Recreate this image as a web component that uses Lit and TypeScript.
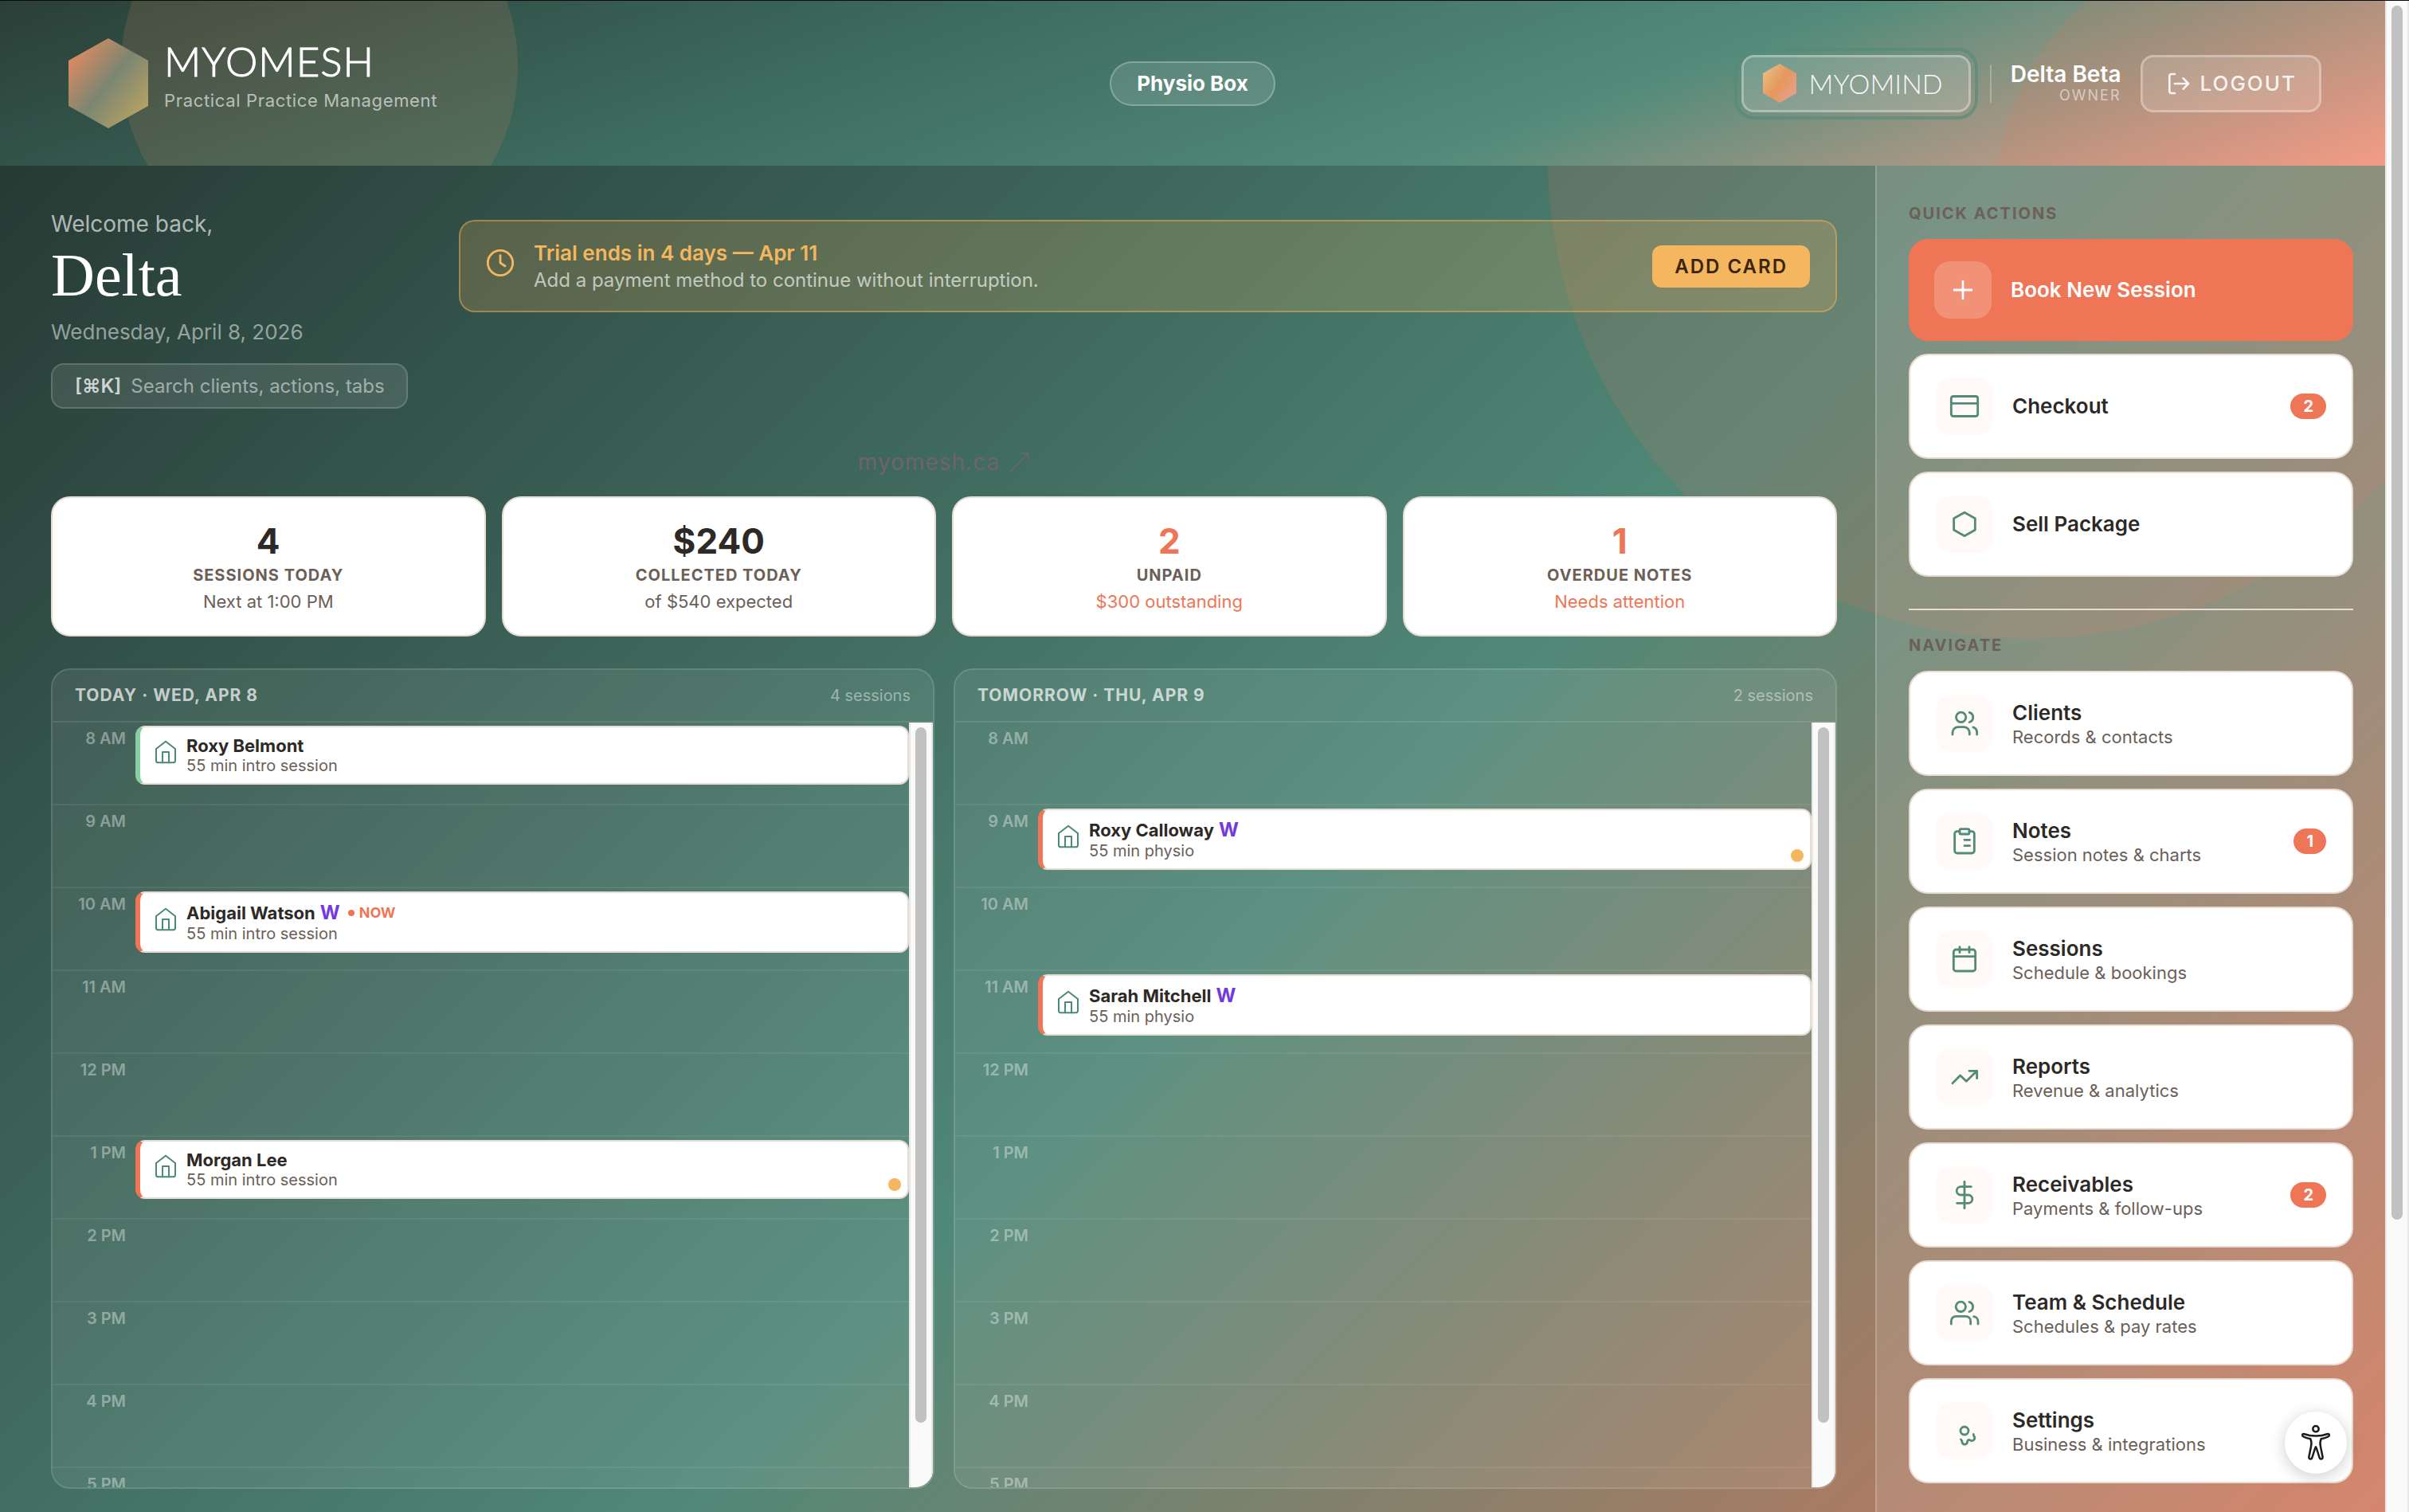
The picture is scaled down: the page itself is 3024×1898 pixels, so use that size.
import { LitElement, html, css, svg, nothing, type TemplateResult } from "lit";
import { customElement, property } from "lit/decorators.js";

type Session = {
  name: string;
  detail: string;
  status: "done" | "booked";
  tag?: boolean;
  now?: boolean;
  alert?: boolean;
};

type NavItem = { icon: string; title: string; sub?: string; count?: number };

const HOURS = ["8 AM", "9 AM", "10 AM", "11 AM", "12 PM", "1 PM", "2 PM", "3 PM", "4 PM", "5 PM"];

const TODAY: Record<string, Session> = {
  "8 AM": { name: "Roxy Belmont", detail: "55 min intro session", status: "done" },
  "10 AM": { name: "Abigail Watson", detail: "55 min intro session", status: "booked", tag: true, now: true },
  "1 PM": { name: "Morgan Lee", detail: "55 min intro session", status: "booked", alert: true },
};

const TOMORROW: Record<string, Session> = {
  "9 AM": { name: "Roxy Calloway", detail: "55 min physio", status: "booked", tag: true, alert: true },
  "11 AM": { name: "Sarah Mitchell", detail: "55 min physio", status: "booked", tag: true },
};

const STATS = [
  { value: "4", label: "Sessions today", note: "Next at 1:00 PM", warn: false },
  { value: "$240", label: "Collected today", note: "of $540 expected", warn: false },
  { value: "2", label: "Unpaid", note: "$300 outstanding", warn: true },
  { value: "1", label: "Overdue notes", note: "Needs attention", warn: true },
];

const QUICK: NavItem[] = [
  { icon: "card", title: "Checkout", count: 2 },
  { icon: "hexagon", title: "Sell Package" },
];

const NAV: NavItem[] = [
  { icon: "clients", title: "Clients", sub: "Records & contacts" },
  { icon: "notes", title: "Notes", sub: "Session notes & charts", count: 1 },
  { icon: "calendar", title: "Sessions", sub: "Schedule & bookings" },
  { icon: "trend", title: "Reports", sub: "Revenue & analytics" },
  { icon: "dollar", title: "Receivables", sub: "Payments & follow-ups", count: 2 },
  { icon: "team", title: "Team & Schedule", sub: "Schedules & pay rates" },
  { icon: "settings", title: "Settings", sub: "Business & integrations" },
];

const SHAPES: Record<string, TemplateResult<2>> = {
  plus: svg`<path d="M12 5.5v13M5.5 12h13" />`,
  card: svg`<rect x="2" y="4.5" width="20" height="15" rx="1.6" /><path d="M2 9.8h20" />`,
  hexagon: svg`<path d="M12 3.2 20 7.6v8.8l-8 4.4-8-4.4V7.6z" />`,
  clients: svg`<circle cx="9.4" cy="7.4" r="3.7" /><path d="M15.7 3.8a3.8 3.8 0 0 1 0 7.3M3 20.4V19a4.2 4.2 0 0 1 4.2-4.2h4.4A4.2 4.2 0 0 1 15.8 19v1.4M18.5 14.9a4.2 4.2 0 0 1 2.9 4v1.5" />`,
  team: svg`<circle cx="9.2" cy="7.4" r="3.7" /><path d="M15.6 3.8a3.8 3.8 0 0 1 0 7.3M2 20.4v-2.2a3.6 3.6 0 0 1 3.6-3.6H13a3.6 3.6 0 0 1 3.6 3.6v2.2M19 14.8a3.7 3.7 0 0 1 3.2 3.6v2" />`,
  notes: svg`<path d="M8.4 4.6H6.4a1.8 1.8 0 0 0-1.8 1.8v12.8A1.8 1.8 0 0 0 6.4 21h11.2a1.8 1.8 0 0 0 1.8-1.8V6.4a1.8 1.8 0 0 0-1.8-1.8h-2M12 11h4M12 15.4h4" /><rect x="8.4" y="2.8" width="7.2" height="3.8" rx=".9" />`,
  calendar: svg`<rect x="3.8" y="4.8" width="16.4" height="16.2" rx="1.8" /><path d="M3.8 10h16.4M8.4 2.8V7M15.6 2.8V7" />`,
  trend: svg`<path d="m3 16.6 5.8-5.8 4.6 4.4 8-7.8M15.6 7.4h5.8V13" />`,
  dollar: svg`<path d="M12 2v20M17 5.8H9.2a3.1 3.1 0 0 0 0 6.2h5.6a3.1 3.1 0 0 1 0 6.2H6.4" />`,
  settings: svg`<circle cx="12" cy="12" r="3" /><path d="m9.3 18.6.9 1.2v.8a2 2 0 0 0 3.9.2c.1-1.3.5-2 1.4-2 .7 0 .9.8 2 .8a2.2 2.2 0 0 0 2.2-2.2c0-1.2-1-1.2-.9-2.8" />`,
  clock: svg`<circle cx="12" cy="12" r="9.4" /><path d="M12 6.4V12l3.6 2.4" />`,
  logout: svg`<path d="M9 21H6a2 2 0 0 1-2-2V5a2 2 0 0 1 2-2h3M9 12h12.5M17 7l4.8 5L17 17" />`,
  home: svg`<path d="m3 9 9-7 9 7v11a2 2 0 0 1-2 2H5a2 2 0 0 1-2-2z" /><path d="M9 22V12h6v10" />`,
  arrow: svg`<path d="M1 23 22 2M14 2h8v8" />`,
};

@customElement("line-icon")
export class LineIcon extends LitElement {
  static styles = css`
    :host { display: block; flex: none; width: 40px; height: 40px; }
    .shape { display: block; width: 100%; height: 100%; }
  `;
  @property() name = "";
  @property({ type: Number }) weight = 1.7;
  render() {
    return html`<svg class="shape" viewBox="0 0 24 24" fill="none" stroke="currentColor"
      stroke-width=${this.weight} stroke-linecap="round" stroke-linejoin="round" aria-hidden="true">
      ${SHAPES[this.name]}
    </svg>`;
  }
}

@customElement("scroll-rail")
export class ScrollRail extends LitElement {
  static styles = css`
    :host {
      display: block; flex: none; width: 30px; box-sizing: border-box; padding: 6px 6px 0;
      background: #fafafa; border: solid #e8e8e8; border-width: 0 2px;
    }
    .thumb { border-radius: 8px; background: #c1c1c1; }
  `;
  @property({ type: Number }) share = 50;
  render() {
    return html`<div class="thumb" style="height:${this.share}%"></div>`;
  }
}

@customElement("day-panel")
export class DayPanel extends LitElement {
  static styles = css`
    :host {
      display: flex; flex-direction: column; min-height: 0; min-width: 0; overflow: hidden;
      border: 2px solid rgba(255, 255, 255, 0.12); border-radius: 24px;
      background: rgba(255, 255, 255, 0.08);
    }
    .head {
      display: flex; align-items: center; justify-content: space-between; flex: none;
      height: 64px; padding: 0 28px; border-bottom: 2px solid rgba(255, 255, 255, 0.1);
    }
    .title {
      margin: 0; font-size: 21px; line-height: 24px; font-weight: 700; letter-spacing: 1px;
      text-transform: uppercase; color: rgba(255, 255, 255, 0.7);
    }
    .count { font-size: 20px; line-height: 24px; color: rgba(255, 255, 255, 0.45); }
    .body { flex: 1; min-height: 0; display: flex; }
    .hours { flex: 1; min-width: 0; overflow: hidden; }
    .row {
      box-sizing: border-box; height: 104px; display: flex; align-items: flex-start; gap: 12px;
      border-bottom: 2px solid rgba(255, 255, 255, 0.07);
    }
    .hour {
      width: 92px; flex: none; padding-top: 8px; text-align: right;
      font-size: 20px; line-height: 24px; font-weight: 600; color: rgba(255, 255, 255, 0.4);
    }
    .event {
      position: relative; flex: 1; min-width: 0; box-sizing: border-box; margin-top: 4px;
      display: flex; align-items: center; gap: 10px; padding: 10px 16px;
      border: 2px solid #e8dcd2; border-left: 6px solid #ee7656; border-radius: 12px;
      background: #fff; color: #2d2926; font-family: inherit; text-align: left;
    }
    .done { border-left-color: #86cfa4; }
    .event line-icon { width: 32px; height: 32px; margin-bottom: 8px; color: #4a8a78; }
    .name { display: flex; align-items: center; gap: 6px; font-size: 22px; line-height: 26px; font-weight: 700; }
    .detail { font-size: 20px; line-height: 24px; color: #6b6058; }
    .tag { font-size: 24px; line-height: 29px; font-weight: 700; color: #7339e0; }
    .now {
      display: flex; align-items: center; gap: 6px; padding-left: 4px;
      font-size: 18px; line-height: 24px; font-weight: 700; color: #ee7656;
    }
    .now::before { content: ""; width: 8px; height: 8px; border-radius: 50%; background: currentColor; }
    .dot {
      position: absolute; right: 8px; bottom: 8px; width: 16px; height: 16px;
      border-radius: 50%; background: #f4b65e;
    }
  `;
  @property() heading = "";
  @property() count = "";
  @property({ attribute: false }) sessions: Record<string, Session> = {};

  private event(s: Session) {
    return html`<button class="event ${s.status}">
      <line-icon name="home" weight="1.5"></line-icon>
      <div>
        <div class="name">
          <span>${s.name}</span>
          ${s.tag ? html`<span class="tag">W</span>` : nothing}
          ${s.now ? html`<span class="now">NOW</span>` : nothing}
        </div>
        <div class="detail">${s.detail}</div>
      </div>
      ${s.alert ? html`<span class="dot"></span>` : nothing}
    </button>`;
  }

  render() {
    return html`
      <div class="head">
        <h2 class="title">${this.heading}</h2>
        <span class="count">${this.count}</span>
      </div>
      <div class="body">
        <div class="hours">
          ${HOURS.map((h) => html`<div class="row">
            <span class="hour">${h}</span>
            ${this.sessions[h] ? this.event(this.sessions[h]) : nothing}
          </div>`)}
        </div>
        <scroll-rail share="91.5"></scroll-rail>
      </div>
    `;
  }
}

@customElement("app-root")
export class AppRoot extends LitElement {
  static styles = css`
    :host {
      display: flex; height: 100vh; overflow: hidden; box-sizing: border-box;
      border-top: 1px solid #0a0a0a;
      font-family: Inter, "Liberation Sans", sans-serif; color: #2d2926;
    }
    a { color: inherit; text-decoration: none; }
    button { font-family: inherit; cursor: pointer; }

    .page { flex: 1; min-width: 0; display: flex; flex-direction: column; }

    .header {
      position: relative; overflow: hidden; flex: none; height: 207px; box-sizing: border-box;
      display: grid; grid-template-columns: 1fr auto 1fr; align-items: center; padding: 0 80px;
      background: linear-gradient(160deg, #2a3f38 0%, #3d6b5e 35%, #528b7a 66%, #f4a28e 100%);
    }
    .glow { position: absolute; border-radius: 50%; }
    .glow-gold { left: 152px; top: -167px; width: 498px; height: 498px; background: rgba(238, 144, 90, 0.14); }
    .glow-coral { right: -191px; top: -86px; width: 680px; height: 680px; background: rgba(238, 117, 84, 0.13); }

    .brand { position: relative; display: flex; align-items: center; gap: 20px; padding-left: 6px; }
    .brand-mark { width: 100px; height: 113px; flex: none; }
    .brand-name {
      font-family: Lato, "Open Sans", sans-serif; font-weight: 300; font-size: 51px; line-height: 48px;
      letter-spacing: 1px; color: #fff; -webkit-text-stroke: 1px #fff;
    }
    .brand-tag {
      margin-bottom: 6px; font-size: 22px; line-height: 50px; letter-spacing: 0.03em;
      color: rgba(255, 255, 255, 0.62);
    }

    .clinic {
      position: relative; padding: 10px 32px; border: 2px solid rgba(255, 255, 255, 0.25); border-radius: 28px;
      background: rgba(255, 255, 255, 0.12); color: #fff; font-size: 26px; line-height: 32px; font-weight: 700;
    }

    .account { position: relative; display: flex; align-items: center; justify-content: flex-end; gap: 24px; }
    .mind {
      box-sizing: border-box; height: 72px; display: flex; align-items: center; gap: 16px; padding: 0 32px 0 24px;
      border: 3px solid rgba(255, 255, 255, 0.32); border-radius: 16px; background: rgba(255, 255, 255, 0.15);
      outline: 4px solid rgba(82, 139, 122, 0.6); outline-offset: 5px;
      font-family: Lato, "Open Sans", sans-serif; font-weight: 300; font-size: 34px; color: rgba(255, 255, 255, 0.95);
    }
    .mind-mark { width: 42px; height: 49px; }
    .rule { width: 2px; height: 48px; background: rgba(255, 255, 255, 0.25); }
    .user { text-align: right; color: #fff; }
    .user-name { font-size: 28px; line-height: 30px; font-weight: 600; }
    .user-role { font-size: 18px; line-height: 24px; letter-spacing: 2px; color: rgba(255, 255, 255, 0.55); }
    .logout {
      box-sizing: border-box; height: 72px; display: flex; align-items: center; gap: 12px; padding: 0 28px;
      border: 3px solid rgba(255, 255, 255, 0.3); border-radius: 16px; background: rgba(255, 255, 255, 0.14);
      color: rgba(255, 255, 255, 0.88); font-size: 26px; font-weight: 500; letter-spacing: 2px;
    }
    .logout line-icon { width: 32px; height: 32px; }

    .work {
      position: relative; flex: 1; min-height: 0; overflow: hidden; display: flex;
      background: linear-gradient(135deg, #263a34 0%, #508878 54%, #ea7254 109%);
    }
    .halo {
      position: absolute; right: -153px; top: -610px; width: 1204px; height: 1204px; border-radius: 50%;
      background: rgba(238, 117, 84, 0.15);
    }

    .main {
      position: relative; flex: 1; min-width: 0; box-sizing: border-box; padding: 48px 48px 29px 64px;
      display: flex; flex-direction: column;
    }
    .intro { display: flex; align-items: flex-start; gap: 64px; }
    .hello { flex: none; color: rgba(255, 255, 255, 0.65); }
    .welcome { font-size: 28px; line-height: 50px; }
    .first-name {
      margin: 0; font-family: "Liberation Serif", "Times New Roman", serif; font-weight: 400;
      font-size: 76px; line-height: 78px; color: #fff;
    }
    .date { margin-top: 12px; font-size: 26px; line-height: 42px; color: rgba(255, 255, 255, 0.5); }
    .search {
      margin-top: 18px; height: 57px; width: 448px; box-sizing: border-box; display: flex; align-items: center;
      gap: 12px; padding: 0 0 0 28px; border: 2px solid rgba(255, 255, 255, 0.16); border-radius: 16px;
      background: rgba(255, 255, 255, 0.1); color: rgba(255, 255, 255, 0.5); font-size: 24px; white-space: nowrap;
    }
    .keys { font-family: inherit; font-weight: 600; color: rgba(255, 255, 255, 0.75); }

    .trial {
      flex: 1; margin-top: 20px; display: flex; align-items: center; gap: 22px; padding: 22px 32px 22px 30px;
      border: 2px solid rgba(244, 180, 90, 0.45); border-radius: 20px; background: rgba(244, 180, 90, 0.2);
    }
    .trial line-icon { margin-bottom: 8px; color: #f4b65e; }
    .trial-text { flex: 1; }
    .trial-title { font-size: 26px; line-height: 36px; font-weight: 600; color: #f4b65e; }
    .trial-note { font-size: 24px; line-height: 32px; color: rgba(255, 255, 255, 0.65); }
    .add-card {
      height: 53px; padding: 0 28px; border: 0; border-radius: 12px; background: #f4b65e; color: #3b2508;
      font-size: 24px; font-weight: 600; letter-spacing: 2px;
    }

    .site {
      align-self: center; margin: 44px 0 20px; display: flex; align-items: center; gap: 12px;
      font-size: 28px; line-height: 46px; letter-spacing: 1px; color: #6e646b;
    }
    .site line-icon { width: 26px; height: 26px; }

    .stats { display: grid; grid-template-columns: repeat(4, 1fr); gap: 20px; }
    .stat {
      box-sizing: border-box; height: 176px; display: flex; flex-direction: column; align-items: center;
      justify-content: center; padding-top: 2px; border: 2px solid #e8dcd2; border-radius: 24px; background: #fff;
    }
    .value { font-size: 44px; line-height: 54px; font-weight: 700; }
    .label {
      font-size: 20px; line-height: 32px; font-weight: 700; letter-spacing: 1px;
      text-transform: uppercase; color: #6b6058;
    }
    .note { font-size: 22px; line-height: 34px; color: #6b6058; }
    .warn .value, .warn .note { color: #ee7656; }

    .days { flex: 1; min-height: 0; margin-top: 40px; display: grid; grid-template-columns: 1fr 1fr; gap: 24px; }

    .side {
      position: relative; flex: none; width: 640px; box-sizing: border-box; padding: 48px 40px 0;
      display: flex; flex-direction: column; gap: 16px;
      border-left: 2px solid rgba(255, 255, 255, 0.18); background: rgba(255, 255, 255, 0.12);
    }
    .side-title {
      margin: 0 0 4px; font-size: 20px; line-height: 24px; font-weight: 700; letter-spacing: 2px;
      text-transform: uppercase; color: #6b6058;
    }
    .side-rule { width: 100%; height: 2px; margin: 24px 0 16px; border: 0; background: #e8dcd2; }
    .item {
      flex: none; box-sizing: border-box; height: 132px; display: flex; align-items: center; gap: 24px;
      padding: 0 32px; border: 2px solid #e8dcd2; border-radius: 24px; background: #fff;
    }
    .tile {
      flex: none; width: 72px; height: 72px; border-radius: 20px; display: flex; align-items: center;
      justify-content: center; background: #fffaf7; color: #528b7a;
    }
    .item-text { flex: 1; text-align: left; }
    .item-title { font-size: 26px; line-height: 34px; font-weight: 600; }
    .item-sub { font-size: 22px; line-height: 26px; color: #6b6058; }
    .book { height: 128px; border: 0; background: #ee7656; color: #fff; }
    .book .tile { background: rgba(255, 255, 255, 0.2); color: #fff; }
    .badge {
      padding: 0 16px; border-radius: 16px; background: #ee7656; color: #fff;
      font-size: 20px; line-height: 32px; font-weight: 700;
    }

    .access {
      position: fixed; right: 78px; bottom: 48px; width: 78px; height: 78px; padding: 0; border: 0;
      border-radius: 50%; background: #fff; box-shadow: 0 4px 20px rgba(0, 0, 0, 0.2);
    }
    .access-mark { display: block; width: 78px; height: 78px; }
  `;

  private item(n: NavItem) {
    return html`<a class="item" href="#">
      <span class="tile"><line-icon name=${n.icon}></line-icon></span>
      <div class="item-text">
        <div class="item-title">${n.title}</div>
        ${n.sub ? html`<div class="item-sub">${n.sub}</div>` : nothing}
      </div>
      ${n.count ? html`<span class="badge">${n.count}</span>` : nothing}
    </a>`;
  }

  render() {
    return html`
      <div class="page">
        <header class="header">
          <div class="glow glow-gold"></div>
          <div class="glow glow-coral"></div>
          <div class="brand">
            <svg class="brand-mark" viewBox="0 0 100 113" aria-hidden="true">
              <defs>
                <linearGradient id="b" x1="0" y1="0.05" x2="1" y2="0.95">
                  <stop offset="0.1" stop-color="#db8a60" />
                  <stop offset="0.5" stop-color="#7b8672" />
                  <stop offset="0.9" stop-color="#b5a164" />
                </linearGradient>
              </defs>
              <path d="M50 0 100 28v57l-50 28L0 85V28z" fill="url(#b)" />
            </svg>
            <div>
              <div class="brand-name">MYOMESH</div>
              <div class="brand-tag">Practical Practice Management</div>
            </div>
          </div>
          <div class="clinic">Physio Box</div>
          <div class="account">
            <button class="mind">
              <svg class="mind-mark" viewBox="0 0 42 49" aria-hidden="true">
                <defs>
                  <linearGradient id="m" x1="0" y1="0.1" x2="1" y2="0.9">
                    <stop offset="0.05" stop-color="#e6bd85" />
                    <stop offset="0.5" stop-color="#e6975b" />
                    <stop offset="0.9" stop-color="#e6a08a" />
                  </linearGradient>
                </defs>
                <path d="M21 0 42 12v25L21 49 0 37V12z" fill="url(#m)" />
              </svg>
              <span>MYOMIND</span>
            </button>
            <div class="rule"></div>
            <div class="user">
              <div class="user-name">Delta Beta</div>
              <div class="user-role">OWNER</div>
            </div>
            <button class="logout"><line-icon name="logout" weight="2"></line-icon><span>LOGOUT</span></button>
          </div>
        </header>

        <div class="work">
          <div class="halo"></div>
          <main class="main">
            <div class="intro">
              <div class="hello">
                <div class="welcome">Welcome back,</div>
                <h1 class="first-name">Delta</h1>
                <div class="date">Wednesday, April 8, 2026</div>
                <button class="search"><kbd class="keys">[⌘K]</kbd><span>Search clients, actions, tabs</span></button>
              </div>
              <div class="trial">
                <line-icon name="clock"></line-icon>
                <div class="trial-text">
                  <div class="trial-title">Trial ends in 4 days — Apr 11</div>
                  <div class="trial-note">Add a payment method to continue without interruption.</div>
                </div>
                <button class="add-card">ADD CARD</button>
              </div>
            </div>
            <a class="site" href="#">myomesh.ca<line-icon name="arrow" weight="1.4"></line-icon></a>
            <div class="stats">
              ${STATS.map((s) => html`<div class="stat ${s.warn ? "warn" : ""}">
                <div class="value">${s.value}</div>
                <div class="label">${s.label}</div>
                <div class="note">${s.note}</div>
              </div>`)}
            </div>
            <div class="days">
              <day-panel heading="Today · Wed, Apr 8" count="4 sessions" .sessions=${TODAY}></day-panel>
              <day-panel heading="Tomorrow · Thu, Apr 9" count="2 sessions" .sessions=${TOMORROW}></day-panel>
            </div>
          </main>
          <nav class="side">
            <h2 class="side-title">Quick actions</h2>
            <button class="item book">
              <span class="tile"><line-icon name="plus"></line-icon></span>
              <span class="item-text item-title">Book New Session</span>
            </button>
            ${QUICK.map((n) => this.item(n))}
            <hr class="side-rule" />
            <h2 class="side-title">Navigate</h2>
            ${NAV.map((n) => this.item(n))}
          </nav>
        </div>
      </div>
      <scroll-rail share="80.6"></scroll-rail>
      <button class="access" aria-label="Accessibility options">
        <svg class="access-mark" viewBox="1344 516 234 234" fill="none" stroke="#1c1c1c" stroke-width="7.5" stroke-linejoin="round" aria-hidden="true">
          <circle cx="1461" cy="581" r="11" />
          <path d="M1416 600c29 10 61 10 90 0 7-1 7 8 2 10-9 4-18 7-27 9-4 9-4 20-2 29l8 39c0 8-9 10-12 3l-10-32-4-9-4 9-10 32c-3 7-12 5-12-3l8-39c2-9 2-20-2-29-9-2-18-5-27-9-5-2-5-11 2-10z" />
        </svg>
      </button>
    `;
  }
}
